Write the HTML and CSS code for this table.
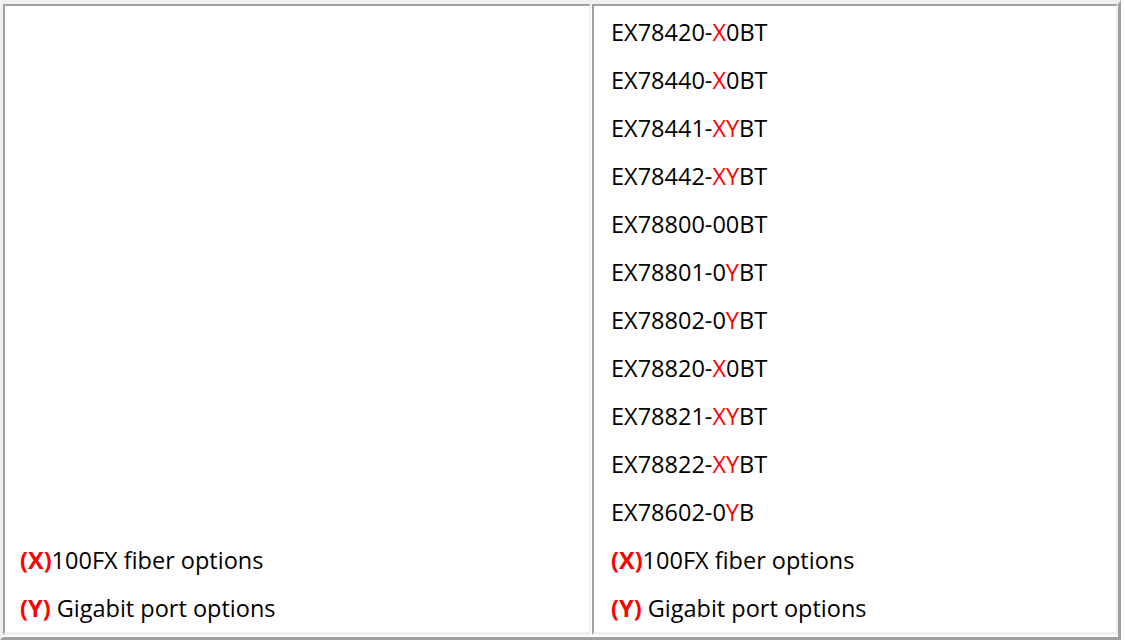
FILE: index.html
```html
<!DOCTYPE html>
<html>
<head>
<meta charset="utf-8">
<link rel="stylesheet" href="styles.css">
</head>
<body>
<div class="table">
  <div class="cell cell-left">
    <p class="line"><b class="red">(X)</b>100FX fiber options</p>
    <p class="line"><b class="red">(Y)</b> Gigabit port options</p>
  </div>
  <div class="cell cell-right">
    <p class="line">EX78420-<span class="red">X</span>0BT</p>
    <p class="line">EX78440-<span class="red">X</span>0BT</p>
    <p class="line">EX78441-<span class="red">XY</span>BT</p>
    <p class="line">EX78442-<span class="red">XY</span>BT</p>
    <p class="line">EX78800-00BT</p>
    <p class="line">EX78801-0<span class="red">Y</span>BT</p>
    <p class="line">EX78802-0<span class="red">Y</span>BT</p>
    <p class="line">EX78820-<span class="red">X</span>0BT</p>
    <p class="line">EX78821-<span class="red">XY</span>BT</p>
    <p class="line">EX78822-<span class="red">XY</span>BT</p>
    <p class="line">EX78602-0<span class="red">Y</span>B</p>
    <p class="line"><b class="red">(X)</b>100FX fiber options</p>
    <p class="line"><b class="red">(Y)</b> Gigabit port options</p>
  </div>
</div>
</body>
</html>
```
FILE: styles.css
```css
html, body {
  margin: 0;
  padding: 0;
  background: #ffffff;
}

body {
  font-family: "Open Sans", "Liberation Sans", sans-serif;
  font-size: 23.5px;
  color: #000000;
}

.table {
  box-sizing: border-box;
  width: 1121px;
  height: 640px;
  display: grid;
  grid-template-columns: 588px 1fr;
  column-gap: 1px;
  border-top: 4px solid #f0f0f0;
  border-left: 3px solid #f0f0f0;
  border-right: 3px solid #a0a0a0;
  border-bottom: 3px solid #a0a0a0;
  padding: 0 0 2px 0;
}

.cell {
  box-sizing: border-box;
  display: flex;
  flex-direction: column;
  justify-content: flex-end;
  border-top: 2px solid #a0a0a0;
  border-left: 2px solid #a0a0a0;
  border-right: 2px solid #f0f0f0;
  border-bottom: 3px solid #f0f0f0;
  padding: 2px 0 0 0;
}

.cell-left {
  padding-left: 15px;
}

.cell-right {
  padding-left: 17px;
  justify-content: flex-start;
}

.line {
  margin: 0;
  height: 48px;
  line-height: 48px;
  white-space: nowrap;
}

.red {
  color: #ff0000;
}

b.red {
  font-weight: 700;
}
```
